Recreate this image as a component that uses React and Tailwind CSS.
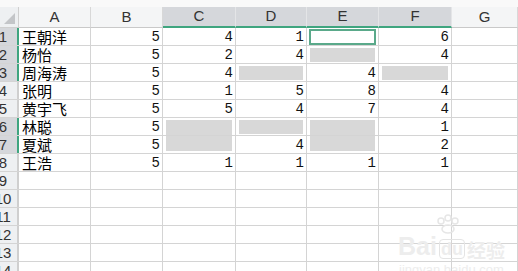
import React from "react";

const cols = ["A", "B", "C", "D", "E", "F", "G"];
const widths = ["w-[72px]", "w-[72px]", "w-[73px]", "w-[71px]", "w-[72px]", "w-[73px]", "w-[66px]"];
const selectedCols = ["C", "D", "E", "F"];

// g = grey fill, t = top of a two-row fill, b = bottom of it, a = active cell
const rows = [
	{ n: 1, sel: true, cells: ["王朝洋", "5", "4", "1", "#a", "6", ""] },
	{ n: 2, sel: true, cells: ["杨怡", "5", "2", "4", "#g", "4", ""] },
	{ n: 3, sel: true, cells: ["周海涛", "5", "4", "#g", "4", "#g", ""] },
	{ n: 4, sel: false, cells: ["张明", "5", "1", "5", "8", "4", ""] },
	{ n: 5, sel: false, cells: ["黄宇飞", "5", "5", "4", "7", "4", ""] },
	{ n: 6, sel: true, cells: ["林聪", "5", "#t", "#g", "#t", "1", ""] },
	{ n: 7, sel: true, cells: ["夏斌", "5", "#b", "4", "#b", "2", ""] },
	{ n: 8, sel: false, cells: ["王浩", "5", "1", "1", "1", "1", ""] },
];
for (let i = 9; i <= 14; i++) rows.push({ n: i, sel: false, cells: ["", "", "", "", "", "", ""] });

const Cell = ({ value, idx }) => {
	const base = `${widths[idx]} h-full shrink-0 border-r border-[#d4d4d4] flex items-center`;
	if (value === "#a")
		return (
			<div className={base}>
				<div className="mx-[2px] h-[16px] w-full border-2 border-[#5aa98a]" />
			</div>
		);
	if (value === "#g")
		return (
			<div className={base}>
				<div className="mx-[3px] h-[14px] w-full bg-[#d8d8d8]" />
			</div>
		);
	if (value === "#t")
		return (
			<div className={`${base} items-end`}>
				<div className="mx-[3px] h-[15px] w-full bg-[#d8d8d8]" />
			</div>
		);
	if (value === "#b")
		return (
			<div className={`${base} items-start`}>
				<div className="mx-[3px] h-[15px] w-full bg-[#d8d8d8]" />
			</div>
		);
	if (idx === 0)
		return (
			<div className={`${base} pl-[3px] text-[15px] text-black font-['Noto_Sans_CJK_SC',sans-serif] leading-none`}>
				{value}
			</div>
		);
	return (
		<div className={`${base} justify-end pr-[2px] text-[14px] text-[#111] font-['Liberation_Mono',monospace] leading-none`}>
			{value}
		</div>
	);
};

export default function App() {
	return (
		<div className="relative w-[518px] h-[271px] overflow-hidden bg-white select-none">
			{/* strip above the headers */}
			<div className="h-[7px] bg-[#f9f9f9]" />

			{/* column headers */}
			<div className="flex h-[21px]">
				<div className="relative w-[19px] shrink-0 bg-[#eef0f2] border-r border-b border-[#cfcfcf]">
					<svg className="absolute right-[3px] bottom-[3px]" width="11" height="11" viewBox="0 0 11 11">
						<polygon points="11,0 11,11 0,11" fill="#c3c5c8" />
					</svg>
				</div>
				{cols.map((c, i) => {
					const sel = selectedCols.includes(c);
					return (
						<div
							key={c}
							className={`${widths[i]} shrink-0 flex items-center justify-center text-[15px] text-[#333] font-['Liberation_Sans',sans-serif] border-r ${
								sel ? "bg-[#d5d7db] border-[#e4e5e7] border-b-2 border-b-[#3fa57f]" : "bg-[#f4f5f6] border-[#d8d8d8] border-b border-b-[#c9c9c9]"
							}`}
						>
							{c}
						</div>
					);
				})}
			</div>

			{/* rows */}
			{rows.map((r) => (
				<div key={r.n} className="flex h-[18px] border-b border-[#d4d4d4]">
					<div
						className={`relative w-[19px] shrink-0 overflow-hidden flex items-center border-r-2 ${
							r.sel ? "bg-[#d5d7db] border-[#3fa57f]" : "bg-[#eef0f2] border-[#cfcfcf]"
						}`}
					>
						<span className="ml-[-12px] w-[30px] shrink-0 text-center text-[15px] text-[#333] font-['Liberation_Sans',sans-serif] leading-none">
							{r.n}
						</span>
					</div>
					{r.cells.map((v, i) => (
						<Cell key={i} value={v} idx={i} />
					))}
				</div>
			))}

			{/* watermark */}
			<div className="absolute left-[398px] top-[214px] flex flex-col items-center text-[#ededed] pointer-events-none">
				<svg width="26" height="20" viewBox="0 0 26 20" className="ml-[-6px]">
					<circle cx="6" cy="7" r="3" fill="none" stroke="#e6e6e6" strokeWidth="1.5" />
					<circle cx="13" cy="4" r="3" fill="none" stroke="#e6e6e6" strokeWidth="1.5" />
					<circle cx="20" cy="7" r="3" fill="none" stroke="#e6e6e6" strokeWidth="1.5" />
					<ellipse cx="13" cy="15" rx="6" ry="4" fill="none" stroke="#e6e6e6" strokeWidth="1.5" />
				</svg>
				<div className="flex items-end gap-[2px] leading-none">
					<span className="text-[25px] font-bold font-['Liberation_Sans',sans-serif]">Bai</span>
					<span className="text-[18px] font-bold font-['Liberation_Sans',sans-serif] border border-[#e4e4e4] rounded px-[1px]">du</span>
					<span className="text-[19px] font-bold font-['Noto_Sans_CJK_SC',sans-serif]">经验</span>
				</div>
				<span className="mt-[4px] text-[13px] font-['Liberation_Sans',sans-serif] leading-none">jingyan.baidu.com</span>
			</div>
		</div>
	);
}
